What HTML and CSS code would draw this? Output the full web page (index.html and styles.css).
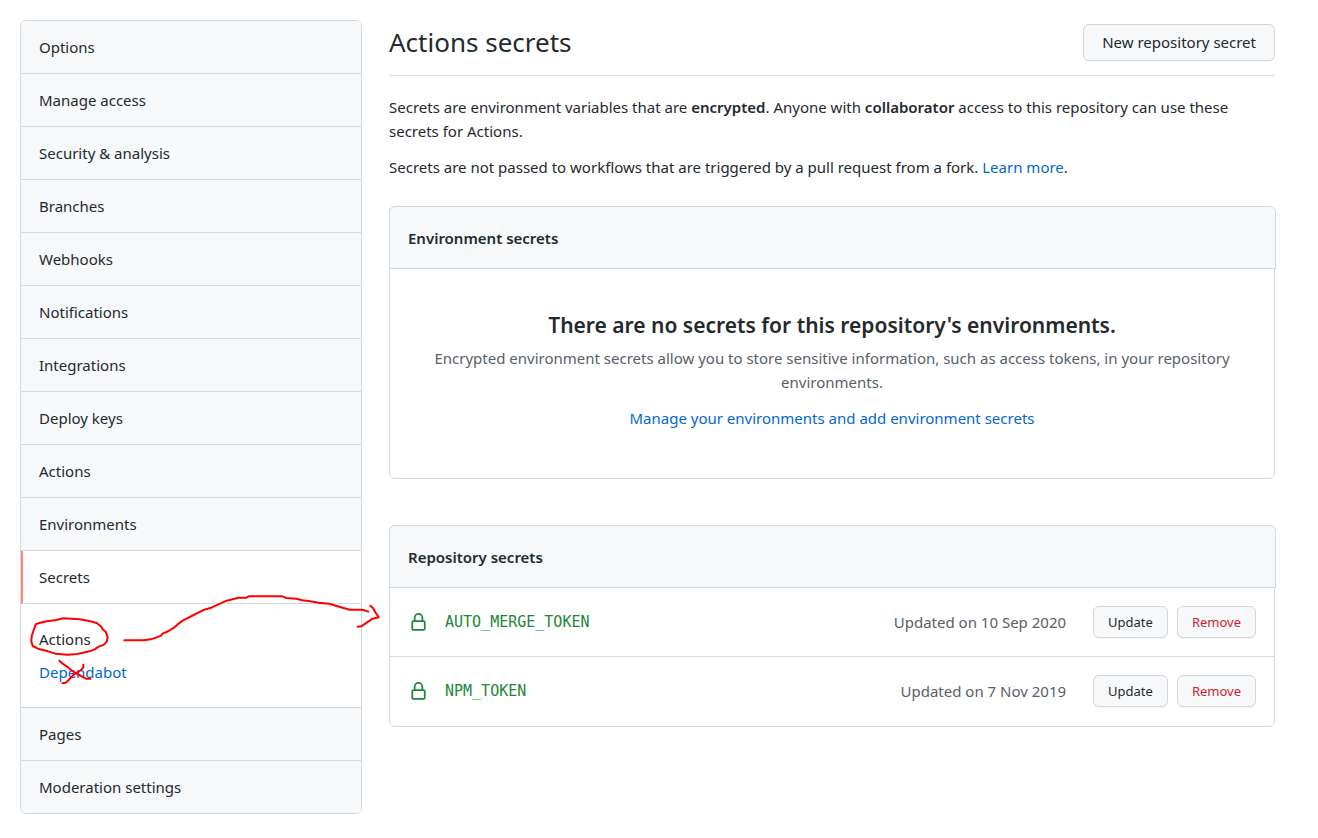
FILE: index.html
```html
<!DOCTYPE html>
<html lang="en">
<head>
<meta charset="utf-8">
<title>Actions secrets</title>
<link rel="stylesheet" href="styles.css">
</head>
<body>
<div class="page">
  <nav class="menu" aria-label="Settings">
    <a class="menu-item" href="#">Options</a>
    <a class="menu-item" href="#">Manage access</a>
    <a class="menu-item" href="#">Security &amp; analysis</a>
    <a class="menu-item" href="#">Branches</a>
    <a class="menu-item" href="#">Webhooks</a>
    <a class="menu-item" href="#">Notifications</a>
    <a class="menu-item" href="#">Integrations</a>
    <a class="menu-item" href="#">Deploy keys</a>
    <a class="menu-item" href="#">Actions</a>
    <a class="menu-item" href="#">Environments</a>
    <a class="menu-item selected" href="#">Secrets</a>
    <div class="submenu">
      <a class="submenu-item current" href="#">Actions</a>
      <a class="submenu-item" href="#">Dependabot</a>
    </div>
    <a class="menu-item" href="#">Pages</a>
    <a class="menu-item" href="#">Moderation settings</a>
  </nav>

  <main class="content">
    <header class="subhead">
      <h1 class="title">Actions secrets</h1>
      <button class="btn" type="button">New repository secret</button>
    </header>

    <p class="text">Secrets are environment variables that are <strong>encrypted</strong>. Anyone with <strong>collaborator</strong> access to this repository can use these secrets for Actions.</p>
    <p class="text">Secrets are not passed to workflows that are triggered by a pull request from a fork. <a class="link" href="#">Learn more</a>.</p>

    <section class="box box-env">
      <h2 class="box-header">Environment secrets</h2>
      <div class="blank">
        <h3 class="blank-title">There are no secrets for this repository's environments.</h3>
        <p class="blank-text">Encrypted environment secrets allow you to store sensitive information, such as access tokens, in your repository environments.</p>
        <a class="link" href="#">Manage your environments and add environment secrets</a>
      </div>
    </section>

    <section class="box">
      <h2 class="box-header">Repository secrets</h2>
      <ul class="secrets">
        <li class="secret">
          <svg class="lock" viewBox="0 0 16 16" aria-hidden="true"><path fill-rule="evenodd" d="M4 4v2h-.25A1.75 1.75 0 002 7.75v5.5c0 .966.784 1.75 1.75 1.75h8.5A1.75 1.75 0 0014 13.25v-5.5A1.75 1.75 0 0012.25 6H12V4a4 4 0 10-8 0zm6.5 2V4a2.5 2.5 0 00-5 0v2h5zM12 7.5h.25a.25.25 0 01.25.25v5.5a.25.25 0 01-.25.25h-8.5a.25.25 0 01-.25-.25v-5.5a.25.25 0 01.25-.25H12z"/></svg>
          <code class="name">AUTO_MERGE_TOKEN</code>
          <span class="date">Updated on 10 Sep 2020</span>
          <div class="actions">
            <button class="btn btn-sm" type="button">Update</button>
            <button class="btn btn-sm danger" type="button">Remove</button>
          </div>
        </li>
        <li class="secret">
          <svg class="lock" viewBox="0 0 16 16" aria-hidden="true"><path fill-rule="evenodd" d="M4 4v2h-.25A1.75 1.75 0 002 7.75v5.5c0 .966.784 1.75 1.75 1.75h8.5A1.75 1.75 0 0014 13.25v-5.5A1.75 1.75 0 0012.25 6H12V4a4 4 0 10-8 0zm6.5 2V4a2.5 2.5 0 00-5 0v2h5zM12 7.5h.25a.25.25 0 01.25.25v5.5a.25.25 0 01-.25.25h-8.5a.25.25 0 01-.25-.25v-5.5a.25.25 0 01.25-.25H12z"/></svg>
          <code class="name">NPM_TOKEN</code>
          <span class="date">Updated on 7 Nov 2019</span>
          <div class="actions">
            <button class="btn btn-sm" type="button">Update</button>
            <button class="btn btn-sm danger" type="button">Remove</button>
          </div>
        </li>
      </ul>
    </section>
  </main>

  <!-- Hand-drawn marks laid over the menu -->
  <svg class="marks" viewBox="0 0 1200 924" aria-hidden="true">
    <path d="M107 283L118 279L140 274L165 271L190 265L238 268L268 273L290 279L304 290L308 298L318 307L323 323L320 335L312 344L296 350L284 358L268 364L232 372L203 374L166 371L144 364L114 356L98 348L94 334L95 318L107 283"/>
    <path d="M178 392L188 401L200 409L214 421L232 432L258 446L271 446"/>
    <path d="M250 404L250 412L242 421L221 434L206 450L197 458L187 460"/>
    <path d="M373 331H432L452 328L468 323L483 317L488 311L506 303L522 293L532 284L548 272L581 255L613 239L634 233L680 212L716 203L740 203L746 199H847L859 204L889 206L907 211L926 213L956 218L987 221L1018 230L1049 239H1084L1093 241L1105 245"/>
    <path d="M1111 227L1119 234L1127 248L1136 262L1118 266L1101 277L1084 289L1073 290"/>
  </svg>
</div>
</body>
</html>
```
FILE: styles.css
```css
* {
  box-sizing: border-box;
}

body {
  margin: 0;
  background: #fff;
  color: #24292e;
  font-family: "Noto Sans", sans-serif;
  font-size: 15px;
  line-height: 24px;
}

h1, h2, h3, p, ul {
  margin: 0;
  padding: 0;
}

strong {
  font-weight: 600;
}

.page {
  position: relative;
  display: flex;
  align-items: flex-start;
  gap: 27px;
  padding: 20px 43px 24px 20px;
}

.menu {
  flex: 0 0 342px;
  border: 1px solid #d1d9e0;
  border-radius: 6px;
  overflow: hidden;
}

.menu-item {
  display: block;
  padding: 14px 18px;
  border-bottom: 1px solid #d5dae1;
  background: #f6f8fa;
  color: #24292e;
  text-decoration: none;
}

.menu-item:last-child {
  border-bottom: 0;
}

.menu-item.selected {
  padding-left: 16px;
  border-left: 2px solid #fd8c73;
  background: #fff;
}

.submenu {
  display: flex;
  flex-direction: column;
  gap: 9px;
  padding: 23px 18px;
  border-bottom: 1px solid #d5dae1;
}

.submenu-item,
.link {
  color: #0366d6;
  text-decoration: none;
}

.submenu-item.current {
  color: #24292e;
}

.content {
  flex: 1;
  min-width: 0;
}

.subhead {
  display: flex;
  justify-content: space-between;
  align-items: flex-start;
  margin-bottom: 19px;
  padding: 4px 0 14px;
  border-bottom: 1px solid #d8dee4;
}

.title {
  font-size: 26px;
  font-weight: 400;
  line-height: 36px;
}

.btn {
  padding: 6px 18px;
  border: 1px solid #d3d7da;
  border-radius: 6px;
  background: #f6f8fa;
  box-shadow: 0 1px 0 rgba(27, 31, 35, 0.04);
  color: #24292e;
  font-family: inherit;
  font-size: 15px;
  line-height: 23px;
}

.btn-sm {
  padding: 5px 14px;
  font-size: 13px;
  line-height: 20px;
}

.danger {
  color: #cb2431;
}

.text {
  margin-bottom: 12px;
}

.box {
  border: 1px solid #d1d9e0;
  border-radius: 6px;
}

.box-env {
  margin: 27px 0 46px;
}

.box-header {
  margin: -1px -2px 0 -1px;
  padding: 19px 18px 18px;
  border: 1px solid #d1d9e0;
  border-radius: 6px 6px 0 0;
  background: #f6f8fa;
  font-size: 15px;
  font-weight: 600;
  line-height: 24px;
}

.blank {
  padding: 39px 36px 48px;
  text-align: center;
}

.blank-title {
  margin-bottom: 4px;
  font-size: 21px;
  font-weight: 600;
  line-height: 34px;
}

.blank-text {
  margin-bottom: 12px;
  color: #586069;
}

.secrets {
  padding-bottom: 1px;
  list-style: none;
}

.secret {
  display: flex;
  align-items: center;
  padding: 18px;
}

.secret + .secret {
  border-top: 1px solid #d8dee4;
}

.lock {
  width: 19px;
  height: 19px;
  margin: 0 17px 0 1px;
  fill: #22863a;
}

.name {
  flex: 1;
  color: #22863a;
  font-family: "DejaVu Sans Mono", monospace;
  font-size: 15px;
}

.date {
  margin-right: 27px;
  color: #586069;
}

.actions {
  display: flex;
  gap: 9px;
}

.marks {
  position: absolute;
  top: 530px;
  left: 0;
  width: 400px;
  height: 308px;
  fill: none;
  stroke: #f00;
  stroke-width: 6;
  stroke-linecap: round;
  stroke-linejoin: round;
  pointer-events: none;
}
```
